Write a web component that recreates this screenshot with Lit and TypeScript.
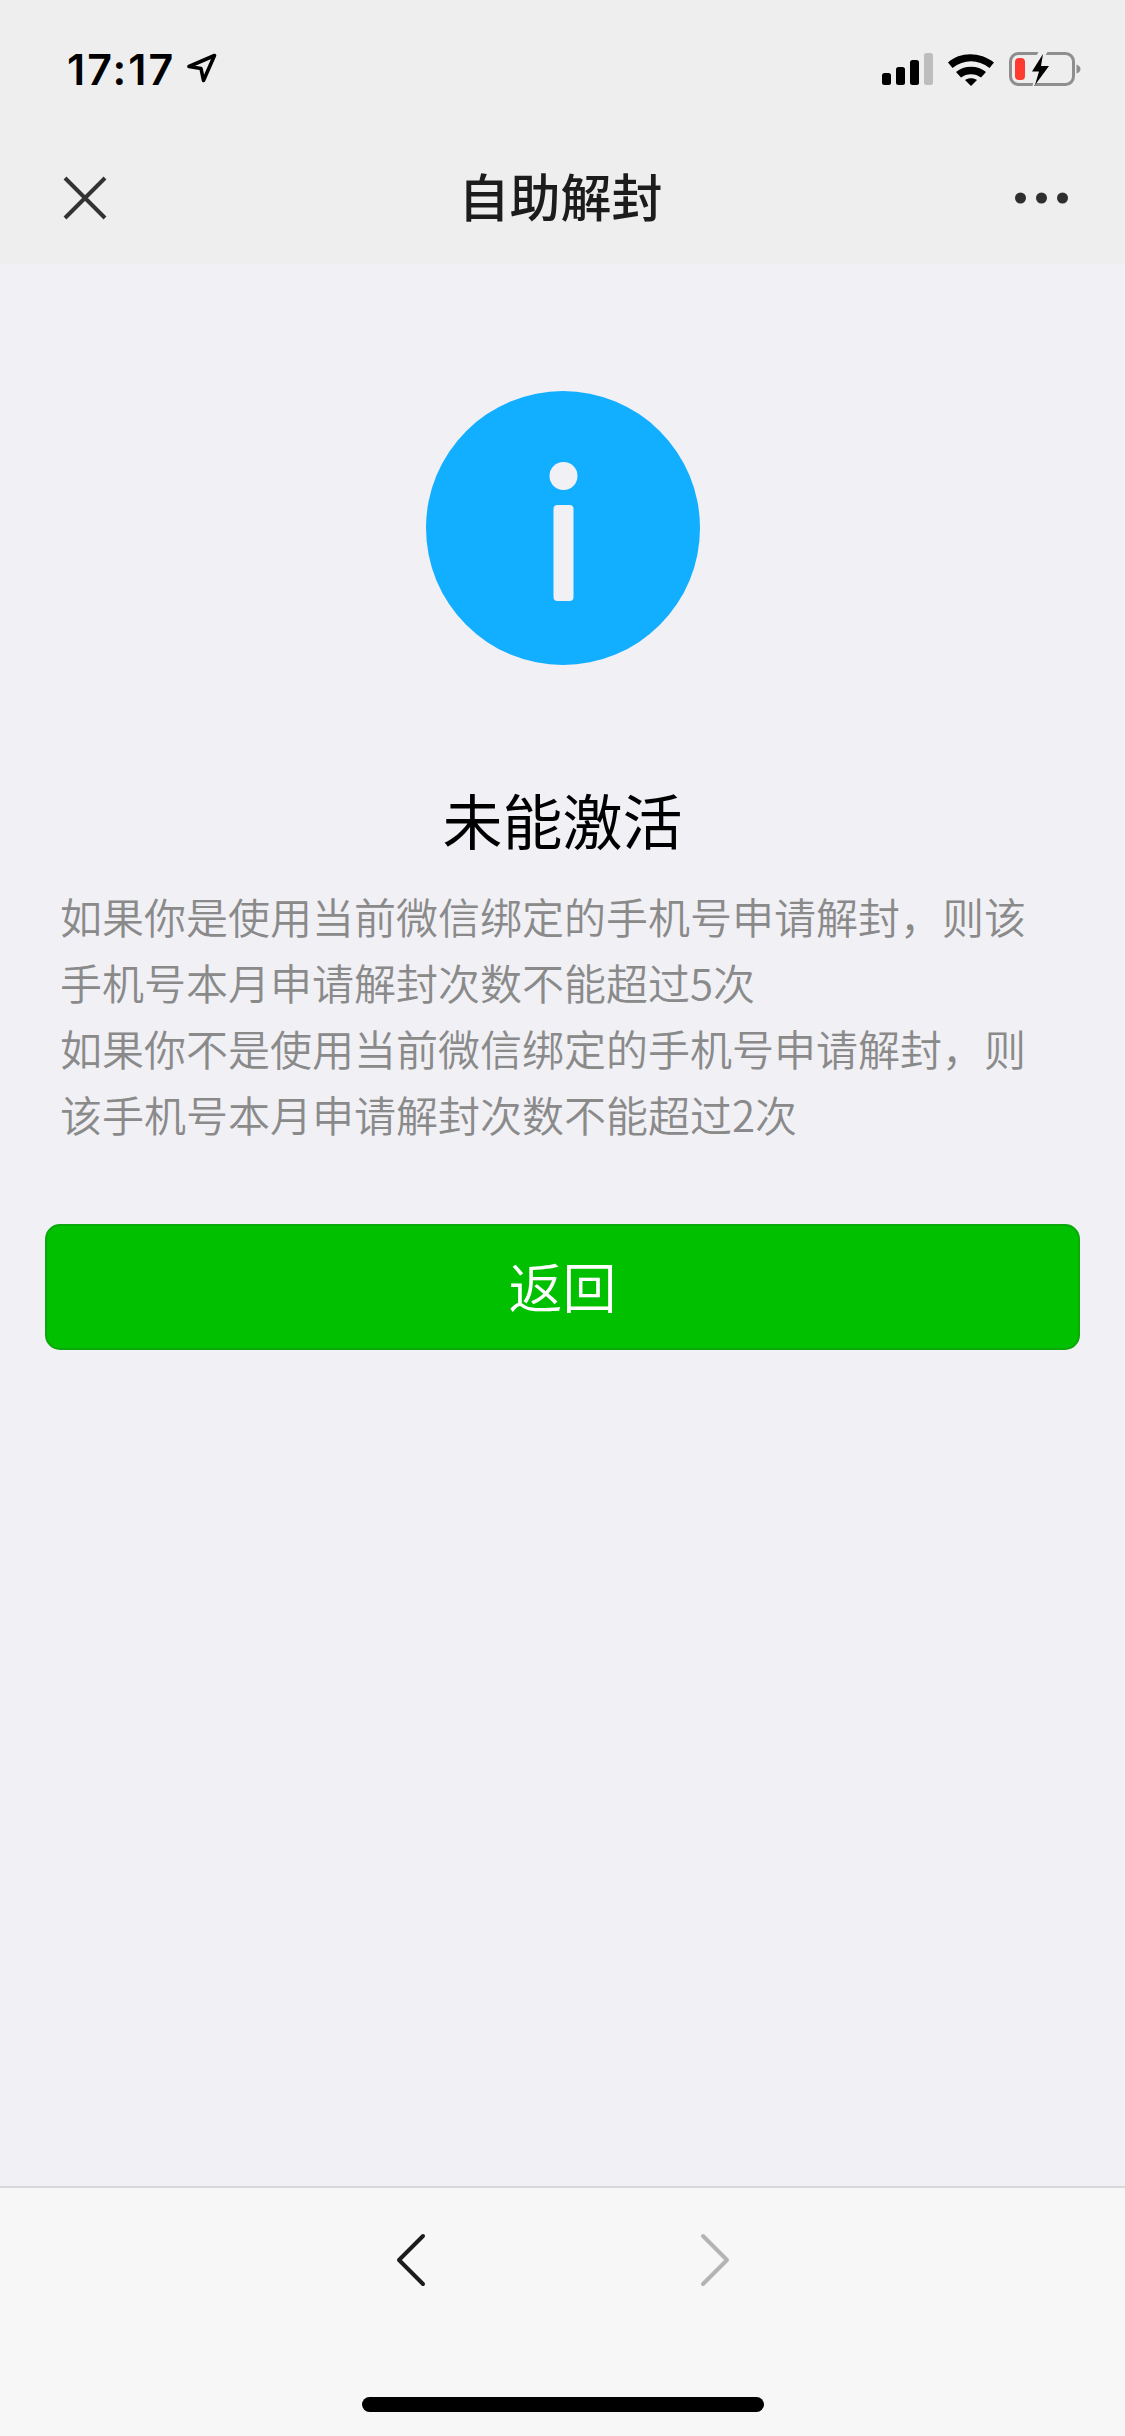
import { LitElement, html, css } from 'lit'
import { customElement } from 'lit/decorators.js'

@customElement('app-root')
export class AppRoot extends LitElement {
  static styles = css`
    :host {
      display: block;
      font-family: "Noto Sans CJK SC", sans-serif;
    }

    .page {
      height: 100vh;
      display: flex;
      flex-direction: column;
      background: #f0f0f5;
    }

    /* status bar + nav */
    .top {
      height: 264px;
      background: #eeeeee;
      flex: none;
      display: flex;
      flex-direction: column;
    }

    .status {
      height: 132px;
      display: flex;
      justify-content: space-between;
      padding: 0 43px 0 67px;
      box-sizing: border-box;
    }

    .clock {
      display: flex;
      align-items: flex-start;
      gap: 12px;
      padding-top: 44px;
    }

    .time {
      font: 600 43px/50px Inter, sans-serif;
      letter-spacing: 2px;
      color: #000;
    }

    .arrow {
      margin-top: 9px;
    }

    .indicators {
      padding-top: 52px;
    }

    .nav {
      height: 132px;
      display: flex;
      align-items: center;
      justify-content: space-between;
      padding: 0 57px 0 62px;
      box-sizing: border-box;
    }

    .title {
      font-size: 51px;
      font-weight: 500;
      line-height: 70px;
      margin: 0 2px 6px 0;
      color: #1c1c1c;
    }

    /* main content */
    .main {
      flex: 1;
      display: flex;
      flex-direction: column;
      padding: 127px 45px 0;
    }

    .info {
      align-self: center;
      display: block;
      margin-left: 1px;
    }

    h1 {
      margin: 112px 0 22px;
      font-size: 60px;
      font-weight: 400;
      line-height: 84px;
      text-align: center;
      color: #000;
    }

    .msg {
      margin: 0;
      padding: 0 16px 0 15px;
      font-size: 42px;
      font-weight: 350;
      line-height: 66px;
      color: #8a8a8a;
    }

    .back-btn {
      margin-top: 77px;
      height: 126px;
      box-sizing: border-box;
      background: #00c000;
      border: 2px solid #0aa80a;
      border-radius: 15px;
      padding-bottom: 3px;
      display: flex;
      align-items: center;
      justify-content: center;
      color: #fff;
      font-size: 54px;
      font-weight: 350;
    }

    /* toolbar */
    .bottom {
      height: 250px;
      flex: none;
      box-sizing: border-box;
      background: #f7f7f7;
      border-top: 2px solid #d8d8dc;
      display: flex;
      flex-direction: column;
      align-items: center;
    }

    .arrows {
      display: flex;
      gap: 274px;
      padding-top: 45px;
    }

    .home {
      margin-top: 110px;
      width: 402px;
      height: 15px;
      border-radius: 8px;
      background: #000;
    }
  `

  render () {
    return html`
      <div class="page">
        <div class="top">
          <div class="status">
            <div class="clock">
              <span class="time">17:17</span>
              <svg class="arrow" width="30" height="30" viewBox="0 0 30 30" fill="none">
                <path d="M2 13.5 27.5 2.5 16.5 27.5 14 15.5Z" stroke="#000" stroke-width="3.6" stroke-linejoin="round"/>
              </svg>
            </div>
            <svg class="indicators" width="200" height="36" viewBox="0 0 200 36">
              <rect x="0" y="21" width="9" height="12" rx="2.5" fill="#000"/>
              <rect x="14" y="15" width="9" height="18" rx="2.5" fill="#000"/>
              <rect x="28" y="8" width="9" height="25" rx="2.5" fill="#000"/>
              <rect x="42" y="1" width="9" height="32" rx="2.5" fill="#bdbdbd"/>
              <path d="M66 10.5C78-.5 98-.5 112 10.5L107.500 16C96 7 82 7 70.500 16Z" fill="#000"/>
              <path d="M74 20C82 13 96 13 104 20L99 25.500C93.500 21 84.500 21 79 25.500Z" fill="#000"/>
              <path d="M83 28C86.500 25.500 91.500 25.500 95 28L89 34Z" fill="#000"/>
              <rect x="128.500" y="1.500" width="63" height="31" rx="8" fill="none" stroke="#8e8e8e" stroke-width="3"/>
              <rect x="133" y="6" width="10" height="22" rx="4" fill="#ff3b30"/>
              <path d="M194.500 12.500C197 13.500 198.500 15 198.500 17C198.500 19 197 20.500 194.500 21.500Z" fill="#8e8e8e"/>
              <path d="M157-1 146 19H154L150 36 168 13H158L166-1Z" fill="#eeeeee"/>
              <path d="M161 2 150 19.500H157L153 33 167 14H159L161 2Z" fill="#000"/>
            </svg>
          </div>
          <div class="nav">
            <svg width="46" height="46" viewBox="0 0 46 46">
              <path d="M3 3 43 43M43 3 3 43" stroke="#333" stroke-width="4"/>
            </svg>
            <span class="title">自助解封</span>
            <svg width="53" height="12" viewBox="0 0 53 12" fill="#2e2e2e">
              <circle cx="5.500" cy="6" r="5.500"/>
              <circle cx="26.500" cy="6" r="5.500"/>
              <circle cx="47.500" cy="6" r="5.500"/>
            </svg>
          </div>
        </div>

        <div class="main">
          <svg class="info" width="274" height="274" viewBox="0 0 274 274">
            <circle cx="137" cy="137" r="137" fill="#12aeff"/>
            <circle cx="137.500" cy="85" r="14" fill="#f0f0f5"/>
            <rect x="127.500" y="114" width="20" height="96" rx="4" fill="#f0f0f5"/>
          </svg>
          <h1>未能激活</h1>
          <p class="msg">如果你是使用当前微信绑定的手机号申请解封，则该手机号本月申请解封次数不能超过5次</p>
          <p class="msg">如果你不是使用当前微信绑定的手机号申请解封，则该手机号本月申请解封次数不能超过2次</p>
          <div class="back-btn">返回</div>
        </div>

        <div class="bottom">
          <div class="arrows">
            <svg width="30" height="54" viewBox="0 0 30 54" fill="none" stroke="#1c1c1c" stroke-width="4" stroke-linecap="round" stroke-linejoin="round">
              <path d="M27 3 3 27 27 51"/>
            </svg>
            <svg width="30" height="54" viewBox="0 0 30 54" fill="none" stroke="#b4b4b4" stroke-width="4" stroke-linecap="round" stroke-linejoin="round">
              <path d="M3 3 27 27 3 51"/>
            </svg>
          </div>
          <div class="home"></div>
        </div>
      </div>
    `
  }
}
